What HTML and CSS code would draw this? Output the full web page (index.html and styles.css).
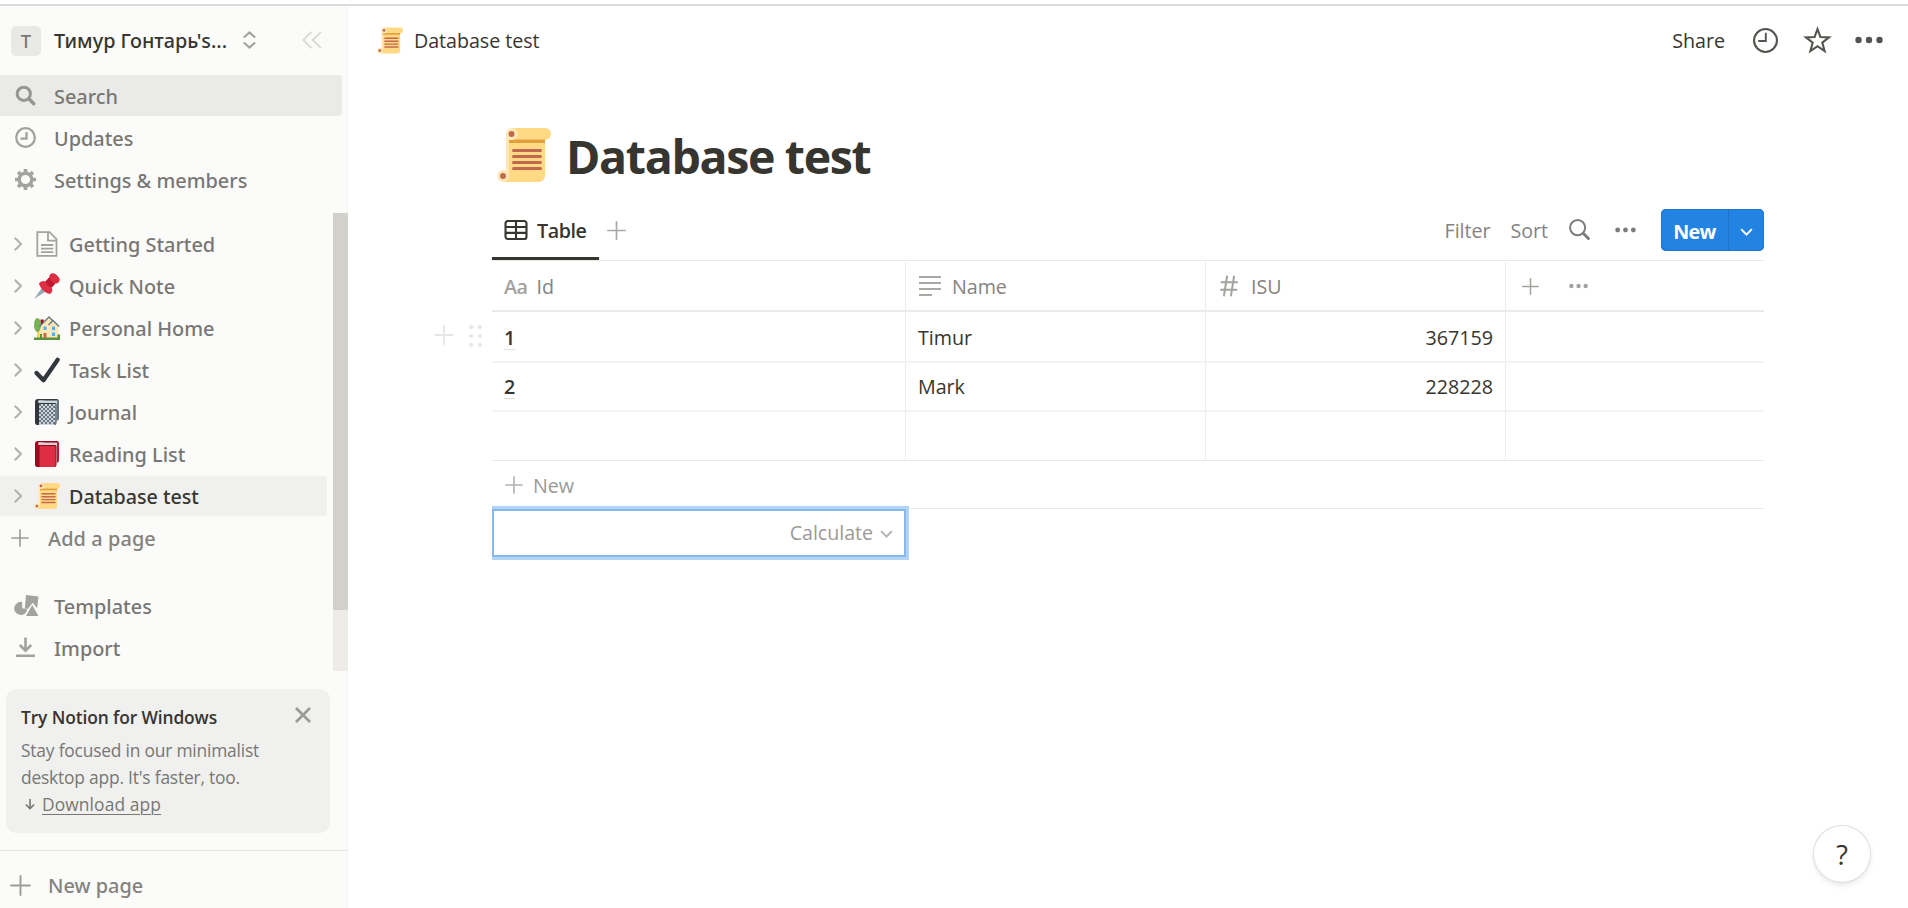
FILE: index.html
```html
<!DOCTYPE html>
<html lang="en">
<head>
<meta charset="utf-8">
<title>Database test</title>
<link rel="stylesheet" href="styles.css">
</head>
<body>
<svg class="defs" aria-hidden="true">
  <symbol id="scroll" viewBox="0 0 36 36">
    <path fill="#ffd983" d="M10 0h22a4 4 0 0 1 0 8v24a4 4 0 0 1-4 4H4l4-4V4z"/>
    <path fill="#e39f3d" d="M8 7.7h24V10H8z"/>
    <path fill="#ffe8b6" d="M10 0a4 4 0 0 0-4 4v24H4a4 4 0 1 0 4 4V8h2a4 4 0 0 0 0-8z"/>
    <circle cx="9.7" cy="4" r="2" fill="#c1694f"/><circle cx="4" cy="32" r="2" fill="#c1694f"/>
    <path stroke="#c1694f" stroke-width="2" stroke-linecap="round" d="M11 15h18M11 19h18M11 23h18M11 27h18"/>
  </symbol>
  <symbol id="plus" viewBox="0 0 20 20"><path fill="none" stroke="currentColor" stroke-width="1.8" stroke-linecap="round" d="M10 1v18M1 10h18"/></symbol>
  <symbol id="right" viewBox="0 0 8 14"><path fill="none" stroke="currentColor" stroke-width="2.2" d="M.8.8 7 7 .8 13.2"/></symbol>
  <symbol id="down" viewBox="0 0 14 9"><path fill="none" stroke="currentColor" stroke-width="2.2" d="M1 1.2 7 7.4l6-6.2"/></symbol>
  <symbol id="clock" viewBox="0 0 24 24"><circle cx="12" cy="12" r="11" fill="none" stroke="currentColor" stroke-width="2"/><path fill="none" stroke="currentColor" stroke-width="1.8" d="M12.3 4.5v8H5"/></symbol>
  <symbol id="dots" viewBox="0 0 28 8"><g fill="currentColor"><circle cx="3.5" cy="4" r="3.2"/><circle cx="14" cy="4" r="3.2"/><circle cx="24.5" cy="4" r="3.2"/></g></symbol>
  <symbol id="lens" viewBox="0 0 20 20"><g fill="none" stroke="currentColor"><circle cx="8.2" cy="8.2" r="7.2" stroke-width="1.9"/><path stroke-width="2.8" stroke-linecap="round" d="m14 14 4.5 4.5"/></g></symbol>
</svg>

<div class="app">
  <aside class="sidebar">
    <div class="workspace">
      <span class="avatar">T</span>
      <span class="workspace-name">Тимур Гонтарь's...</span>
      <svg class="updown" viewBox="0 0 13 18"><path fill="none" stroke="currentColor" stroke-width="2.2" d="M.8 6.5 6.5 1.4l5.7 5.1M.8 11.5l5.7 5.1 5.7-5.1"/></svg>
      <svg class="collapse" viewBox="0 0 20 18"><path fill="none" stroke="currentColor" stroke-width="1.8" d="M9.5.8 1.2 9l8.3 8.2M19 .8 10.7 9l8.3 8.2"/></svg>
    </div>
    <nav class="nav">
      <a class="nav-row selected"><svg class="ico" viewBox="0 0 21 21"><g fill="none" stroke="currentColor"><circle cx="8.8" cy="8.8" r="6.6" stroke-width="3"/><path stroke-width="3.4" stroke-linecap="round" d="m14 14 4.8 4.8"/></g></svg>Search</a>
      <a class="nav-row"><svg class="ico" viewBox="0 0 21 21"><circle cx="10.5" cy="10.5" r="9.3" fill="none" stroke="currentColor" stroke-width="2.3"/><path fill="none" stroke="currentColor" stroke-width="2.3" d="M11.500 5v6.700H5.500"/></svg>Updates</a>
      <a class="nav-row"><svg class="ico" viewBox="0 0 21 21"><circle cx="10.5" cy="10.5" r="6.300" fill="none" stroke="currentColor" stroke-width="3.400"/><path stroke="currentColor" stroke-width="3.600" d="M10.500 0v4M10.500 17v4M0 10.500h4M17 10.500h4M3.100 3.100l2.800 2.800M15.100 15.100l2.800 2.800M3.100 17.900l2.800-2.800M15.100 5.900l2.800-2.800"/></svg>Settings &amp; members</a>
    </nav>

    <div class="pages-wrap">
      <div class="pages">
        <a class="page"><svg class="tri"><use href="#right"/></svg><svg class="emoji" viewBox="0 0 26 26"><g fill="none" stroke="#a3a29e" stroke-width="1.800"><path d="M3.300 1.200h12.200l7 7v16.600H3.300z"/><path d="M14 1.200v8.400h8.500M7 14h12.300M7 17.600h12.300M7 21.200h12.300"/></g></svg>Getting Started</a>
        <a class="page"><svg class="tri"><use href="#right"/></svg><svg class="emoji" viewBox="0 0 26 26"><path fill="#99aab5" d="m0 26 8.500-12 4 4z"/><path fill="#dd2e44" d="M5 10.500c1.500-2.300 4-3.200 6.500-2l4-4.200C14.800 2 17 0 19.500.3c3 .8 5.500 3.500 6.300 6.300.2 2.500-2 4.200-4.500 3.900l-3.700 4c1.500 2.700.8 5-1.800 6.500C11 20 6 15.500 5 10.500z"/><path fill="#be1931" d="m11.500 8.500 4-4.200c.8 3 2.800 5.200 5.800 6.200l-3.700 4c-2.600-1-5.200-3.400-6.100-6z"/></svg>Quick Note</a>
        <a class="page"><svg class="tri"><use href="#right"/></svg><svg class="emoji" viewBox="0 0 26 26"><path fill="#a0041e" d="M6.500 4.500h3.200v6H6.500z"/><path fill="#ffe8b6" d="M5.500 11.500 14.500 3l10 8v13h-19z"/><path fill="#ffcc4d" d="M3 16h2.500v8H3z"/><path fill="#5c913b" d="M0 22.500h26V25H0zM23.500 19.500H26V23h-2.500zM6 19h2v4H6z"/><ellipse cx="3.500" cy="10" rx="3.500" ry="7" fill="#77b255"/><path fill="none" stroke="#66757f" stroke-width="1.400" d="m5.500 11.500 9.500-9.500 4 4M14.500 10l4.500-4.500 6 6"/><path fill="#55acee" d="M9.500 11.500h3V15h-3zM18 11.500h3V15h-3zM18 17.500h3V21h-3z"/><path fill="#c1694f" d="M9.500 18h3v5h-3z"/></svg>Personal Home</a>
        <a class="page"><svg class="tri"><use href="#right"/></svg><svg class="emoji" viewBox="0 0 26 26"><path fill="none" stroke="#31373d" stroke-width="4.300" stroke-linecap="round" stroke-linejoin="round" d="m2.500 16 7 7.200L23.700 2.700"/></svg>Task List</a>
        <a class="page"><svg class="tri"><use href="#right"/></svg><svg class="emoji" viewBox="0 0 26 26"><path fill="#66757f" d="M4 0h19a2 2 0 0 1 2 2v17a3 3 0 0 1-2 3L22 5z"/><path fill="#ccd6dd" d="M3 1.500h20V21h-1.500V5H3z"/><path fill="#31373d" d="M4 0h19v1.200H5.500C3.500 1.200 3.500 4 5.500 4H21a1.500 1.500 0 0 1 1.500 1.500V24a2 2 0 0 1-2 2H3.500A2.500 2.500 0 0 1 1 23.500V3a3 3 0 0 1 3-3z"/><path fill="#ccd6dd" d="M5 5h16.500v19a2 2 0 0 1-2 2H5z"/><path fill="none" stroke="#66757f" stroke-width="2" stroke-dasharray="2 2" d="M5 6h16M7 8h14M5 10h16M7 12h14M5 14h16M7 16h14M5 18h16M7 20h14M5 22h16M7 24h14"/></svg>Journal</a>
        <a class="page"><svg class="tri"><use href="#right"/></svg><svg class="emoji" viewBox="0 0 26 26"><path fill="#be1931" d="M4 0h19a2 2 0 0 1 2 2v17a3 3 0 0 1-2 3L22 5z"/><path fill="#ccd6dd" d="M3 1.500h20V21h-1.500V5H3z"/><path fill="#a0041e" d="M4 0h19v1.200H5.500C3.500 1.200 3.500 4 5.500 4H21a1.500 1.500 0 0 1 1.500 1.500V24a2 2 0 0 1-2 2H3.500A2.500 2.500 0 0 1 1 23.500V3a3 3 0 0 1 3-3z"/><path fill="#dd2e44" d="M5.500 5H20a1.500 1.500 0 0 1 1.500 1.500V24a2 2 0 0 1-2 2h-14z"/></svg>Reading List</a>
        <a class="page active"><svg class="tri"><use href="#right"/></svg><svg class="emoji"><use href="#scroll"/></svg>Database test</a>
        <a class="add"><svg class="plus-sm"><use href="#plus"/></svg>Add a page</a>
        <div class="tools">
          <a class="nav-row"><svg class="ico ico-wide" viewBox="0 0 26 22"><g fill="currentColor"><path d="M8.500 7.300V14l3 .5 2.300 1A6.900 6.900 0 1 1 8.500 7.300z"/><path d="m12.500 0 13 1.500-1.300 12.300-4.700-5.600-5.200 6.400-3.100-.5z"/><path d="M19 10.500 25.500 22h-13z"/></g></svg>Templates</a>
          <a class="nav-row"><svg class="ico" viewBox="0 0 21 21"><path fill="none" stroke="currentColor" stroke-width="2.600" d="M10.500.5v13M4.800 8l5.700 5.700L16.200 8M1 18.800h19"/></svg>Import</a>
        </div>
      </div>
      <div class="track"><div class="thumb"></div></div>
    </div>

    <div class="promo">
      <div class="promo-head">Try Notion for Windows
        <svg class="close" viewBox="0 0 16 16"><path stroke="currentColor" stroke-width="2.800" d="m1 1 14 14M15 1 1 15"/></svg>
      </div>
      <div class="promo-text">Stay focused in our minimalist<br>desktop app. It's faster, too.</div>
      <div class="download"><svg class="arrow" viewBox="0 0 12 13"><path fill="none" stroke="currentColor" stroke-width="1.900" d="M6 0v11.500M1 6.500l5 5 5-5"/></svg><u>Download app</u></div>
    </div>
    <div class="new-page"><svg class="plus-md"><use href="#plus"/></svg>New page</div>
  </aside>

  <main class="main">
    <header class="topbar">
      <svg class="crumb-emoji"><use href="#scroll"/></svg><span class="crumb">Database test</span>
      <span class="share">Share</span>
      <svg class="clock"><use href="#clock"/></svg>
      <svg class="star" viewBox="0 0 27 26"><path fill="none" stroke="currentColor" stroke-width="2.100" d="m13.500 2 2.900 8.100 8.600.3-6.700 5.300 2.300 8.300-7.100-4.800L6.400 24l2.300-8.300L2 10.400l8.600-.3z"/></svg>
      <svg class="more"><use href="#dots"/></svg>
    </header>

    <section class="content">
      <div class="title-row"><svg class="title-emoji"><use href="#scroll"/></svg><h1>Database test</h1></div>

      <div class="viewbar">
        <div class="tab"><svg class="grid-ico" viewBox="0 0 24 21"><path fill="none" stroke="currentColor" stroke-width="2.200" d="M3.500 1h17A2.500 2.500 0 0 1 23 3.500v14a2.500 2.500 0 0 1-2.500 2.500h-17A2.500 2.500 0 0 1 1 17.500v-14A2.500 2.500 0 0 1 3.500 1zM1 7.300h22M1 13.500h22M12 1v19"/></svg>Table</div>
        <svg class="add-view"><use href="#plus"/></svg>
        <span class="filter">Filter</span><span class="sort">Sort</span>
        <svg class="lens"><use href="#lens"/></svg>
        <svg class="view-more"><use href="#dots"/></svg>
        <div class="new-btn"><span class="new-label">New</span><span class="new-drop"><svg class="drop-ico"><use href="#down"/></svg></span></div>
      </div>

      <div class="table">
        <div class="row head">
          <div class="cell"><span class="aa">Aa</span>Id</div>
          <div class="cell"><svg class="lines" viewBox="0 0 22 20"><path stroke="currentColor" stroke-width="2" d="M0 1h22M0 7h22M0 13h22M0 19h13"/></svg>Name</div>
          <div class="cell"><svg class="hash" viewBox="0 0 18 21"><path fill="none" stroke="currentColor" stroke-width="2" stroke-linecap="round" d="M7 1 4 20M14 1l-3 19M1.500 6.800H17M1 14.200h15.500"/></svg>ISU</div>
          <div class="cell"><svg class="col-plus"><use href="#plus"/></svg><svg class="col-more"><use href="#dots"/></svg></div>
        </div>
        <div class="row body">
          <div class="handle"><svg class="handle-plus"><use href="#plus"/></svg><svg class="grip" viewBox="0 0 13 22"><g fill="currentColor"><circle cx="2.200" cy="2.200" r="2.100"/><circle cx="10.800" cy="2.200" r="2.100"/><circle cx="2.200" cy="11" r="2.100"/><circle cx="10.800" cy="11" r="2.100"/><circle cx="2.200" cy="19.800" r="2.100"/><circle cx="10.800" cy="19.800" r="2.100"/></g></svg></div>
          <div class="cell"><b class="id">1</b></div><div class="cell">Timur</div><div class="cell num">367159</div><div class="cell"></div>
        </div>
        <div class="row body">
          <div class="cell"><b class="id">2</b></div><div class="cell">Mark</div><div class="cell num">228228</div><div class="cell"></div>
        </div>
        <div class="row body last">
          <div class="cell"></div><div class="cell"></div><div class="cell"></div><div class="cell"></div>
        </div>
        <div class="new-row"><svg class="row-plus"><use href="#plus"/></svg>New</div>
        <div class="calc">Calculate<svg class="calc-ico"><use href="#down"/></svg></div>
      </div>
    </section>
    <div class="help">?</div>
  </main>
</div>
</body>
</html>
```
FILE: styles.css
```css
* { box-sizing: border-box; }
body {
  margin: 0;
  height: 908px;
  overflow: hidden;
  background: #fff;
  color: #37352f;
  font: 400 19.7px/28px "Open Sans", "Noto Sans", sans-serif;
  letter-spacing: -0.05px;
  white-space: nowrap;
}
svg { display: block; flex: none; overflow: visible; }
.defs { position: absolute; width: 0; height: 0; }

.app {
  display: flex;
  height: 904px;
  margin-top: 4px;
  border-top: 2px solid #dcdcdc;
}

/* Sidebar */
.sidebar {
  display: flex;
  flex-direction: column;
  flex: none;
  width: 348px;
  height: 902px;
  overflow: hidden;
  background: #fbfbfa;
  box-shadow: inset -1px 0 0 #f3f3f2;
  color: #787773;
  font-family: "Noto Sans", sans-serif;
  font-weight: 480;
  font-size: 19.9px;
  letter-spacing: 0;
}
.sidebar > * { flex: none; }
.workspace {
  display: flex;
  align-items: center;
  height: 69px;
  padding: 1px 26px 0 11px;
}
.avatar {
  flex: none;
  width: 30px;
  height: 30px;
  border-radius: 5px;
  background: #e9e9e7;
  font-size: 18.5px;
  line-height: 30px;
  text-align: center;
}
.workspace-name {
  flex: none;
  width: 202px;
  padding-left: 13px;
  color: #37352f;
  font-size: 19.8px;
  font-weight: 540;
}
.updown { width: 13px; height: 18px; margin-bottom: 2px; color: #a3a29e; }
.collapse { width: 20px; height: 18px; margin: 0 0 2px auto; color: #d9d8d5; }

.nav-row {
  display: flex;
  align-items: center;
  width: 342px;
  height: 41px;
  margin-bottom: 1px;
  padding: 2px 0 0 15px;
  border-radius: 0 4px 4px 0;
}
.selected { background: #eaeae8; }
.ico { width: 21px; height: 21px; margin: 0 18px 2px 0; color: #a3a29e; }
.selected .ico { color: #969590; }
.ico-wide { width: 25px; margin-left: -1px; margin-right: 15px; }

.pages-wrap { display: flex; height: 458px; margin-top: 12px; }
.pages { width: 333px; padding-top: 10px; }
.page {
  display: flex;
  align-items: center;
  width: 327px;
  height: 40px;
  margin: 1px 0;
  padding: 2px 0 0 14px;
  border-radius: 0 4px 4px 0;
}
.page + .page { margin-top: 2px; }
.active { background: #f0f0ef; color: #37352f; font-size: 19.7px; }
.tri { width: 8px; height: 14px; margin: 0 12px 2px 0; color: #b3b2af; }
.emoji { width: 26px; height: 26px; margin: 0 9px 2px 0; }
.add { display: flex; align-items: center; height: 42px; padding: 2px 0 0 11px; color: #83827e; letter-spacing: .1px; }
.plus-sm { width: 18px; height: 18px; margin: 0 19px 2px 0; color: #9c9b97; }
.tools { padding-top: 26px; }
.tools .nav-row { width: 327px; }
.track { width: 15px; background: #edece9; }
.thumb { height: 397px; background: #d3d1cb; }

.promo {
  width: 324px;
  height: 144px;
  margin: 18px 0 0 6px;
  padding: 15px 15px 0;
  border-radius: 10px;
  background: #f0f0ef;
  font-family: "Open Sans", sans-serif;
  font-size: 17.4px;
  line-height: 27px;
}
.promo-head {
  display: flex;
  align-items: flex-start;
  justify-content: space-between;
  height: 33px;
  color: #37352f;
  font-weight: 600;
  letter-spacing: -0.12px;
}
.close { width: 16px; height: 16px; margin: 3px 4px 0 0; color: #9b9a97; }
.promo-text { font-weight: 400; letter-spacing: -0.2px; }
.download { display: flex; align-items: center; padding-left: 4px; letter-spacing: 0.1px; }
.download u { text-decoration-thickness: 1px; text-underline-offset: 3px; }
.arrow { width: 10px; height: 13px; margin-right: 7px; }

.new-page {
  display: flex;
  align-items: center;
  height: 71px;
  margin-top: 17px;
  padding-left: 10px;
  border-top: 1px solid #e6e6e4;
  color: #83827e;
}
.plus-md { width: 21px; height: 21px; margin: 0 17px 2px 0; color: #9c9b97; }

/* Main */
.main { flex: 1; }
.topbar { display: flex; align-items: center; height: 69px; padding: 0 25px 0 29px; }
.crumb-emoji { width: 26px; height: 27px; margin: 0 11px 1px 0; }
.share { margin-left: auto; }
.clock { width: 25px; height: 25px; margin: 0 0 1px 28px; color: #55534e; }
.star { width: 27px; height: 26px; margin: 0 0 1px 26px; color: #55534e; }
.more { width: 28px; height: 8px; margin: 0 0 2px 24px; color: #55534e; }

.content { width: 1272px; margin-left: 144px; }
.title-row { display: flex; align-items: center; height: 128px; padding: 32px 0 0 5px; }
.title-emoji { width: 54px; height: 54px; margin-right: 15px; }
h1 { margin: 2px 0 0; font-size: 46.5px; line-height: 60px; font-weight: 700; letter-spacing: -1.35px; }

.viewbar {
  display: flex;
  align-items: center;
  height: 58px;
  padding-bottom: 4px;
  border-bottom: 1px solid #e9e9e7;
  color: #85837f;
}
.tab {
  display: flex;
  align-items: center;
  width: 107px;
  height: 57px;
  margin-bottom: -4px;
  padding: 2px 0 0 12px;
  border-bottom: 3px solid #37352f;
  color: #37352f;
  font-weight: 600;
  line-height: 30px;
  letter-spacing: -0.45px;
}
.grid-ico { width: 24px; height: 20px; margin: 0 9px 2px 0; }
.add-view { width: 19px; height: 19px; margin: 1px auto 0 8px; color: #a9a8a4; }
.filter, .sort { padding-top: 3px; }
.sort { margin-left: 20px; }
.lens { width: 21px; height: 21px; margin-left: 21px; color: #7d7c78; }
.view-more { width: 21px; height: 6px; margin: 0 25px 0 25px; color: #7d7c78; }
.new-btn {
  display: flex;
  width: 103px;
  height: 42px;
  border-radius: 5px;
  background: #2383e2;
  box-shadow: inset 0 0 0 1px #1f76cc;
  color: #fff;
}
.new-label {
  width: 68px;
  border-right: 1px solid #1f74c8;
  font-weight: 700;
  line-height: 45px;
  text-align: center;
  letter-spacing: -0.6px;
}
.new-drop { display: flex; flex: 1; align-items: center; justify-content: center; }
.drop-ico { width: 13px; height: 8px; margin-top: 4px; }

.row {
  position: relative;
  display: grid;
  grid-template-columns: 414px 300px 300px 258px;
}
.cell {
  display: flex;
  align-items: center;
  padding: 0 12px;
  border-right: 1px solid #ededec;
}
.cell:last-child { border-right: 0; }
.head { height: 51px; padding-top: 1px; border-bottom: 2px solid #ebebe9; color: #85837f; line-height: 30px; }
.head .cell { padding-top: 2px; }
.aa { margin-right: 9px; color: #a3a29e; font-weight: 600; letter-spacing: -0.5px; }
.lines { width: 22px; height: 20px; margin: 0 11px 3px 1px; color: #a9a8a4; }
.hash { width: 18px; height: 22px; margin: 0 13px 2px 2px; color: #a3a29e; }
.col-plus { width: 17px; height: 17px; margin: 0 30px 2px 4px; color: #a3a29e; }
.col-more { width: 19px; height: 6px; margin-bottom: 2px; color: #a3a29e; }
.body { height: 49px; border-bottom: 2px solid #f3f3f2; }
.head + .body { height: 51px; line-height: 30px; }
.head + .body .cell { padding-top: 2px; }
.last { height: 49px; border-bottom: 1px solid #e9e9e7; }
.id { font-weight: 600; line-height: 23px; border-bottom: 1px solid #e0e0de; }
.num { justify-content: flex-end; letter-spacing: 0; }
.handle {
  position: absolute;
  left: -58px;
  top: 13px;
  display: flex;
  gap: 15px;
  color: #e6e6e5;
}
.handle-plus { width: 20px; height: 20px; }
.grip { width: 13px; height: 22px; }
.new-row {
  display: flex;
  align-items: center;
  height: 48px;
  border-bottom: 1px solid #e9e9e7;
  padding: 2px 0 0 12px;
  color: #9b9a97;
}
.row-plus { width: 18px; height: 18px; margin: 0 10px 2px 1px; color: #b3b2af; }
.calc {
  display: flex;
  align-items: center;
  justify-content: flex-end;
  width: 414px;
  height: 48px;
  padding-right: 11px;
  border: 2px solid #86b8ea;
  box-shadow: 0 0 0 3px #b3d4f5;
  clip-path: inset(-3px -3px -3px 0);
  color: #9b9a97;
}
.calc-ico { width: 13px; height: 8px; margin: 2px 0 0 7px; color: #b3b2af; }

.help {
  position: absolute;
  left: 1814px;
  top: 826px;
  width: 56px;
  height: 56px;
  border-radius: 50%;
  background: #fff;
  box-shadow: 0 0 0 1px #dededd, 0 3px 6px rgba(15, 15, 15, .1);
  font-size: 27px;
  font-weight: 500;
  line-height: 58px;
  text-align: center;
}
```
